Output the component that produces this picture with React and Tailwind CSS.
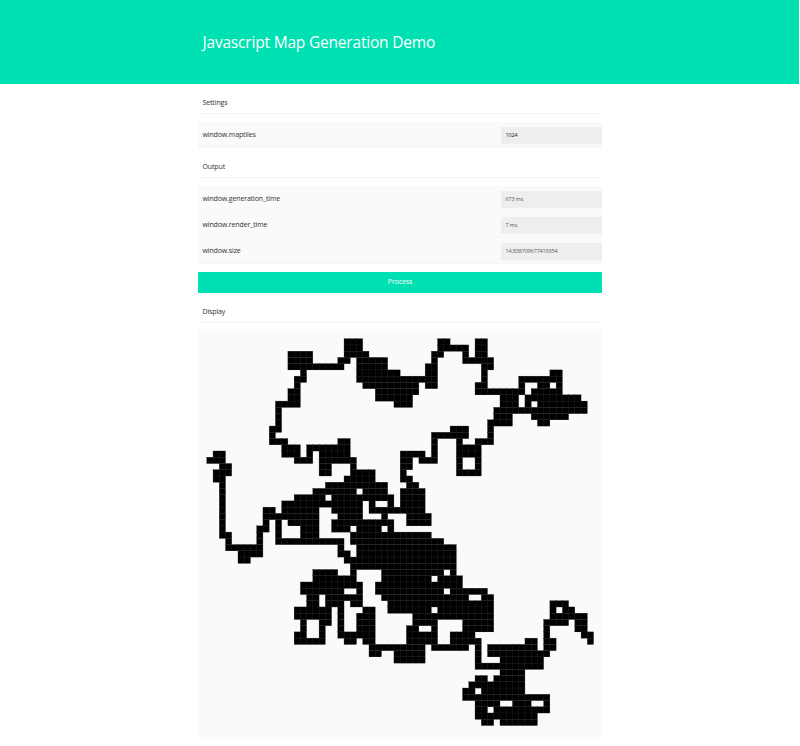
const CELL = 6.238;

// Filled runs of each map row, as [first column, column after the last].
const MAP_ROWS = [
  [[22, 25], [37, 39], [43, 45]],
  [[22, 25], [37, 42], [43, 45]],
  [[13, 17], [22, 26], [36, 38], [41, 42], [43, 45]],
  [[13, 17], [21, 23], [24, 29], [36, 37], [41, 46]],
  [[13, 22], [24, 29], [35, 37], [44, 46]],
  [[15, 16], [24, 31], [35, 37], [44, 45], [55, 57]],
  [[14, 16], [24, 37], [44, 45], [50, 57]],
  [[14, 15], [25, 34], [35, 37], [43, 45], [50, 51], [53, 55], [56, 57]],
  [[13, 15], [27, 34], [43, 51], [52, 57]],
  [[13, 15], [27, 33], [47, 50], [51, 60]],
  [[11, 15], [30, 33], [47, 50], [51, 52], [53, 61]],
  [[11, 12], [46, 61]],
  [[11, 12], [46, 49], [52, 58]],
  [[11, 12], [45, 49], [53, 55]],
  [[10, 12], [39, 42], [45, 46]],
  [[10, 11], [36, 42], [45, 46]],
  [[10, 13], [21, 23], [36, 37], [40, 41], [43, 46]],
  [[12, 15], [16, 23], [36, 37], [40, 44]],
  [[1, 3], [12, 15], [16, 17], [18, 23], [31, 35], [36, 37], [40, 44]],
  [[0, 3], [14, 17], [18, 24], [31, 33], [34, 37], [40, 41], [43, 44]],
  [[2, 4], [18, 20], [23, 24], [31, 33], [40, 41], [43, 44]],
  [[1, 4], [18, 20], [23, 27], [31, 32], [40, 44]],
  [[1, 3], [22, 27], [31, 33]],
  [[2, 3], [19, 29], [32, 34]],
  [[2, 3], [17, 24], [25, 29], [31, 35]],
  [[2, 3], [14, 19], [20, 30], [31, 35]],
  [[2, 3], [12, 25], [26, 27], [29, 30], [31, 35]],
  [[2, 3], [9, 11], [12, 18], [20, 25], [26, 35]],
  [[2, 3], [9, 18], [21, 25], [28, 29], [32, 36]],
  [[2, 3], [9, 10], [11, 12], [13, 18], [20, 30], [32, 36]],
  [[2, 3], [8, 10], [11, 12], [15, 18], [20, 23], [24, 28], [29, 30]],
  [[2, 4], [8, 9], [11, 12], [15, 18], [23, 36]],
  [[3, 4], [8, 9], [11, 22], [23, 38]],
  [[3, 9], [21, 22], [24, 40]],
  [[5, 9], [21, 23], [24, 40]],
  [[5, 7], [22, 40]],
  [[23, 40]],
  [[17, 21], [23, 24], [28, 38], [39, 40]],
  [[17, 24], [28, 36], [37, 41]],
  [[15, 25], [27, 41]],
  [[15, 22], [24, 25], [27, 38], [39, 45]],
  [[16, 18], [19, 25], [28, 42], [44, 46]],
  [[16, 18], [19, 22], [23, 25], [29, 46], [55, 58]],
  [[14, 20], [21, 22], [25, 27], [29, 36], [37, 46], [55, 56], [57, 59]],
  [[14, 20], [21, 22], [24, 27], [33, 46], [55, 61]],
  [[15, 16], [18, 20], [21, 22], [24, 27], [33, 37], [41, 46], [54, 58], [59, 61]],
  [[15, 16], [18, 19], [21, 22], [24, 27], [32, 34], [36, 37], [41, 46], [54, 55], [59, 61]],
  [[14, 16], [18, 19], [21, 27], [32, 37], [39, 43], [54, 55], [60, 62]],
  [[14, 19], [22, 24], [25, 27], [32, 37], [39, 44], [51, 53], [54, 56], [61, 62]],
  [[26, 35], [36, 42], [43, 44], [45, 53], [54, 56]],
  [[26, 28], [30, 35], [43, 44], [45, 55]],
  [[30, 35], [43, 44], [47, 54]],
  [[43, 54]],
  [[47, 51]],
  [[43, 45], [46, 51]],
  [[42, 51]],
  [[41, 43], [44, 51]],
  [[41, 55]],
  [[43, 47], [49, 52], [54, 55]],
  [[43, 45], [46, 55]],
  [[43, 53]],
  [[44, 46], [47, 53]],
];

function MapView() {
  return (
    <svg className="block h-[406px] w-[404px] bg-[#fafafa]" viewBox="0 0 404 406">
      <g transform="translate(8.8 7.7)">
        {MAP_ROWS.flatMap((runs, row) =>
          runs.map(([from, to]) => (
            <g key={`${row}-${from}`}>
              <rect x={from * CELL} y={row * CELL} width={(to - from) * CELL} height={CELL + 0.1} fill="#000" />
              {Array.from({ length: to - from }, (_, i) => (
                <rect
                  key={i}
                  x={(from + i) * CELL}
                  y={row * CELL}
                  width={CELL}
                  height={CELL}
                  fill="none"
                  stroke="#222"
                  strokeWidth="0.3"
                />
              ))}
            </g>
          )),
        )}
      </g>
    </svg>
  );
}

function Heading({ children }) {
  return (
    <h2 className="h-[30px] border-b border-[#f5f5f5] pl-[4.5px] pt-[13px] text-[7px] leading-[12px] tracking-[-0.13px]">
      {children}
    </h2>
  );
}

function Row({ name, value, editable }) {
  return (
    <div className="flex h-[26px] items-center justify-between border-b border-[#f5f5f5] bg-[#fafafa] pt-px">
      <span className="pl-[4.5px] text-[7px] leading-[12px] tracking-[-0.13px]">{name}</span>
      <span
        className={`flex h-[17px] w-[101px] items-center bg-[#eee] pl-[4.5px] pt-px text-[5.4px] tracking-[-0.1px] ${editable ? "text-[#111]" : "text-[#555]"}`}
      >
        {value}
      </span>
    </div>
  );
}

export default function App() {
  return (
    <div className="h-[746px] overflow-hidden bg-white font-['Open_Sans',sans-serif] text-[#333]">
      <header className="h-[84px] w-[799px] bg-[#00e1b3]">
        <h1 className="ml-[202.5px] pt-[31px] text-[15.5px] leading-[22px] tracking-[-0.19px] text-white">
          Javascript Map Generation Demo
        </h1>
      </header>
      <main className="ml-[198px] w-[404px]">
        <Heading>Settings</Heading>
        <div className="mt-[8px]">
          <Row name="window.maptiles" value="1024" editable />
        </div>
        <Heading>Output</Heading>
        <div className="mt-[8px]">
          <Row name="window.generation_time" value="673 ms" />
          <Row name="window.render_time" value="7 ms" />
          <Row name="window.size" value="14.838709677419354" />
        </div>
        <button className="mt-[8px] block h-[21px] w-full bg-[#00e1b3] text-[7px] tracking-[-0.13px] text-white">
          Process
        </button>
        <Heading>Display</Heading>
        <div className="mt-[8px]">
          <MapView />
        </div>
      </main>
    </div>
  );
}
